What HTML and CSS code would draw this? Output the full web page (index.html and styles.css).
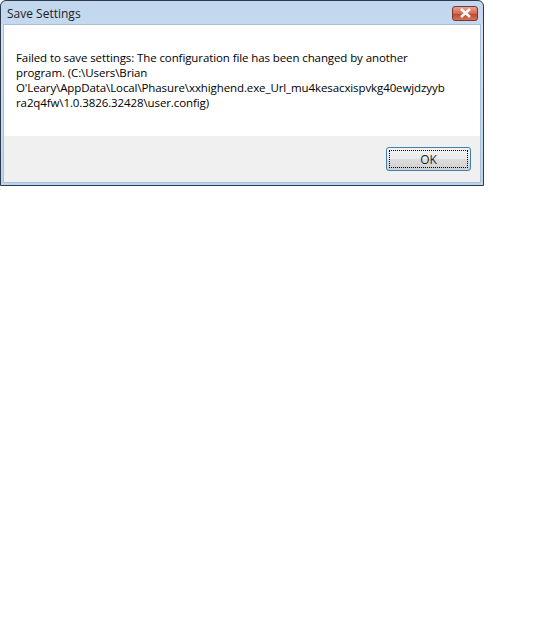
FILE: index.html
```html
<!DOCTYPE html>
<html lang="en">
	<head>
		<meta charset="utf-8">
		<link rel="stylesheet" href="styles.css">
	</head>
	<body>
		<div class="window">
			<div class="titlebar">
				<span class="title">Save Settings</span>
				<a href="#" class="close">
					<svg width="13" height="10" viewBox="0 0 13 10">
						<path d="M2 1 L11 9 M11 1 L2 9" stroke="#fff" stroke-width="2.4" fill="none"/>
					</svg>
				</a>
			</div>
			<div class="frame">
				<div class="client">
					<div class="message">
						<p>Failed to save settings: The configuration file has been changed by another<br>program. (C:\Users\Brian<br>O'Leary\AppData\Local\Phasure\xxhighend.exe_Url_mu4kesacxispvkg40ewjdzyyb<br>ra2q4fw\1.0.3826.32428\user.config)</p>
					</div>
					<div class="footer">
						<button class="btn">OK</button>
					</div>
				</div>
			</div>
		</div>
	</body>
</html>
```
FILE: styles.css
```css
* {
	margin: 0;
	padding: 0;
	box-sizing: border-box;
}
body {
	background-color: #fff;
	font-family: "Open Sans", sans-serif;
}
.window {
	width: 484px;
	height: 186px;
	border: 1px solid #2c3b4c;
	border-radius: 6px 6px 0 0;
	background: linear-gradient(#c2d7ee, #d3e2f3);
	display: flex;
	flex-direction: column;
}
.titlebar {
	height: 23px;
	display: flex;
	align-items: center;
	justify-content: space-between;
	padding: 0 5px 0 6px;
}
.title {
	font-size: 12px;
	color: #1e1e1e;
	padding-top: 1px;
}
.close {
	width: 26px;
	height: 15px;
	margin-top: 1px;
	border: 1px solid #6e3a32;
	border-radius: 3px;
	background: linear-gradient(#e8a395, #d4684f 50%, #c0432a 51%, #d6735c);
	display: flex;
	align-items: center;
	justify-content: center;
}
.frame {
	flex: 1;
	padding: 0 2px 2px 2px;
	background: linear-gradient(#d3e2f3, #b9d6ee);
	display: flex;
}
.client {
	flex: 1;
	border: 1px solid #a9c0d8;
	display: flex;
	flex-direction: column;
}
.message {
	background-color: #fff;
	height: 111px;
	padding: 25px 0 0 12px;
}
.message p {
	font-size: 11.5px;
	line-height: 15px;
	color: #000;
	letter-spacing: -0.1px;
}
.footer {
	flex: 1;
	background-color: #f0f0f0;
	display: flex;
	justify-content: flex-end;
	padding: 11px 9px 0 0;
}
.btn {
	width: 85px;
	height: 24px;
	font-family: "Open Sans", sans-serif;
	font-size: 12px;
	color: #1e1e1e;
	border: 1px solid #3c7fb1;
	border-radius: 3px;
	background: linear-gradient(#f2f2f2, #ebebeb 50%, #dddddd 51%, #cfcfcf);
	outline: 1px dotted #000;
	outline-offset: -4px;
}
```
